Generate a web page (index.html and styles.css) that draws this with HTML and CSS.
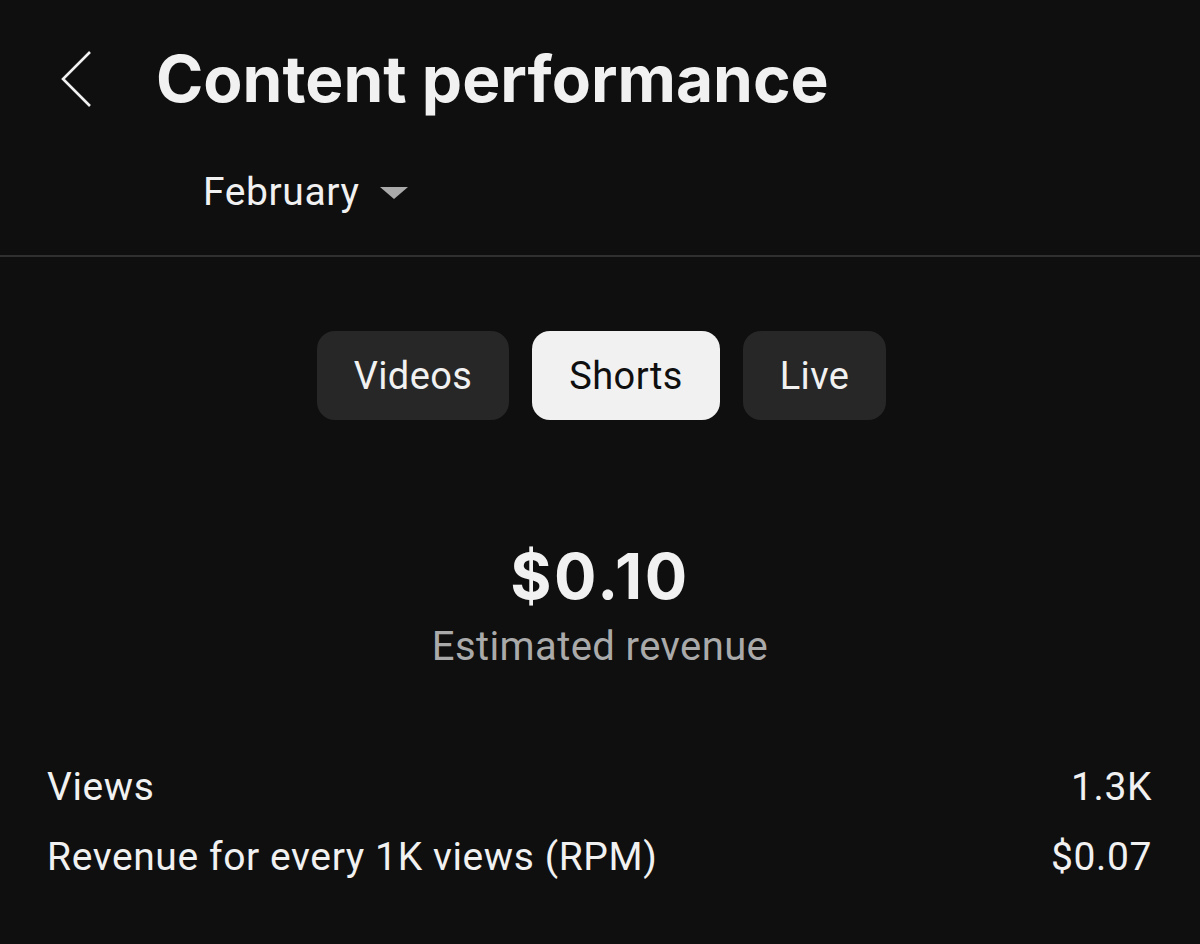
FILE: index.html
```html
<!DOCTYPE html>
<html>
<head>
<meta charset="utf-8">
<link rel="stylesheet" href="styles.css">
</head>
<body>
<header class="header">
  <div class="title-row">
    <svg class="back" width="34" height="58" viewBox="0 0 34 58"><polyline points="30,2 3,29 30,56" fill="none" stroke="#f1f1f1" stroke-width="2.6"/></svg>
    <h1 class="title">Content performance</h1>
  </div>
  <div class="period">
    <span class="period-label">February</span>
    <svg class="caret" width="28" height="14" viewBox="0 0 28 14"><polygon points="0,1 28,1 14,13" fill="#aaaaaa"/></svg>
  </div>
</header>
<main class="main">
  <div class="chips">
    <div class="chip">Videos</div>
    <div class="chip active">Shorts</div>
    <div class="chip">Live</div>
  </div>
  <div class="summary">
    <div class="amount">$0.10</div>
    <div class="amount-label">Estimated revenue</div>
  </div>
  <div class="stats">
    <div class="stat"><span>Views</span><span>1.3K</span></div>
    <div class="stat"><span>Revenue for every 1K views (RPM)</span><span>$0.07</span></div>
  </div>
</main>
</body>
</html>
```
FILE: styles.css
```css
html, body {
  margin: 0;
  background: #0f0f0f;
  color: #f1f1f1;
  font-family: Roboto, "Noto Sans", sans-serif;
}
.header {
  border-bottom: 2px solid #303030;
  padding-top: 40px;
  height: 257px;
  box-sizing: border-box;
}
.title-row {
  display: flex;
  align-items: center;
  padding-left: 60px;
  height: 78px;
}
.back {
  display: block;
  margin-right: 62px;
}
.title {
  margin: 0;
  font-family: Inter, sans-serif;
  font-weight: 700;
  font-size: 64px;
  line-height: 78px;
}
.period {
  display: flex;
  align-items: center;
  padding-left: 203px;
  margin-top: 52px;
  height: 44px;
}
.period-label {
  font-size: 39px;
  letter-spacing: 0.6px;
  line-height: 44px;
}
.caret {
  margin-left: 21px;
  display: block;
  margin-top: 2px;
}
.main {
  padding-top: 74px;
}
.chips {
  display: flex;
  justify-content: center;
  gap: 23px;
  padding-left: 3px;
}
.chip {
  height: 89px;
  padding: 0 37px;
  display: flex;
  align-items: center;
  border-radius: 18px;
  background: #272727;
  font-size: 38px;
  letter-spacing: 0.4px;
  color: #f1f1f1;
}
.chip.active {
  background: #f1f1f1;
  color: #0f0f0f;
}
.summary {
  text-align: center;
  margin-top: 118px;
}
.amount {
  font-family: Inter, sans-serif;
  font-weight: 700;
  font-size: 63px;
  letter-spacing: 2.5px;
  line-height: 76px;
}
.amount-label {
  font-size: 40px;
  letter-spacing: 0.4px;
  color: #aaaaaa;
  line-height: 48px;
  margin-top: 9px;
}
.stats {
  margin-top: 81px;
  padding: 0 48px 0 47px;
}
.stat {
  display: flex;
  justify-content: space-between;
  font-size: 39px;
  letter-spacing: 0.6px;
  line-height: 70px;
}
```
